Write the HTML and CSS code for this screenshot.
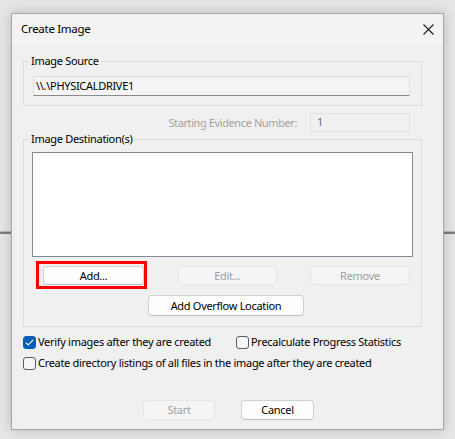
FILE: index.html
```html
<!DOCTYPE html>
<html>
<head>
<meta charset="utf-8">
<title>Create Image</title>
<link rel="stylesheet" href="styles.css">
</head>
<body>
<div class="backdrop-line"></div>
<div class="dialog">
  <div class="titlebar">
    <span class="title">Create Image</span>
    <svg class="close" width="11" height="11" viewBox="0 0 11 11"><path d="M0.5 0.5L10.5 10.5M10.5 0.5L0.5 10.5" stroke="#1b1b1b" stroke-width="1.1" fill="none"/></svg>
  </div>
  <div class="content">
    <fieldset class="group g1">
      <legend>Image Source</legend>
      <div class="textbox">\\.\PHYSICALDRIVE1</div>
    </fieldset>
    <div class="evidence-row">
      <span class="ev-label">Starting Evidence Number:</span>
      <div class="ev-input">1</div>
    </div>
    <fieldset class="group g2">
      <legend>Image Destination(s)</legend>
      <div class="listbox"></div>
      <div class="btn-row">
        <div class="btn-wrap">
          <button class="btn btn-add">Add...</button>
          <span class="highlight"></span>
        </div>
        <button class="btn btn-disabled btn-edit">Edit...</button>
        <button class="btn btn-disabled btn-remove">Remove</button>
      </div>
      <button class="btn btn-overflow">Add Overflow Location</button>
    </fieldset>
    <div class="check-row row1">
      <label class="check check-verify"><span class="box checked"><svg width="9" height="7" viewBox="0 0 9 7"><path d="M0.8 3.6L3.2 6L8.2 0.9" stroke="#fff" stroke-width="1.1" fill="none"/></svg></span><span>Verify images after they are created</span></label>
      <label class="check"><span class="box"></span><span>Precalculate Progress Statistics</span></label>
    </div>
    <div class="check-row row2">
      <label class="check"><span class="box"></span><span>Create directory listings of all files in the image after they are created</span></label>
    </div>
    <div class="footer">
      <button class="btn btn-disabled btn-start">Start</button>
      <button class="btn btn-cancel">Cancel</button>
    </div>
  </div>
</div>
</body>
</html>
```

FILE: styles.css
```css
html, body {
  margin: 0;
  padding: 0;
}
body {
  width: 455px;
  height: 439px;
  background: #e6e6e6;
  font-family: "Noto Sans", "Open Sans", sans-serif;
  font-size: 11px;
  letter-spacing: -0.3px;
  color: #000;
  position: relative;
  overflow: hidden;
}
.backdrop-line {
  position: absolute;
  left: 0;
  right: 0;
  top: 231px;
  height: 2px;
  border-top: 1px solid #b9b9b9;
  background: #7e7e7e;
}
.dialog {
  position: relative;
  box-sizing: border-box;
  margin: 13px 0 0 11px;
  width: 433px;
  height: 417px;
  border: 1px solid #a5a5a5;
  background: #f0f0f0;
  box-shadow: 0 0 12px rgba(0,0,0,0.2);
}
.titlebar {
  height: 30px;
  background: #f3f3f3;
  display: flex;
  align-items: center;
  justify-content: space-between;
  padding: 0 9px 0 9px;
}
.title {
  font-size: 11.5px;
  line-height: 16px;
  padding-bottom: 1px;
}
.close {
  display: block;
  margin-top: 1px;
}
.content {
  display: flex;
  flex-direction: column;
  align-items: flex-start;
}
.group {
  margin: 0 0 0 11px;
  padding: 0;
  width: 399px;
  box-sizing: border-box;
  border: 1px solid #dcdcdc;
  min-inline-size: 0;
}
.group legend {
  margin-left: 5px;
  padding: 0 2px;
  line-height: 14px;
  font-size: 11px;
}
.g1 {
  margin-top: 10px;
  padding-bottom: 9px;
}
.textbox {
  margin: 8px 0 0 9px;
  width: 377px;
  height: 20px;
  box-sizing: border-box;
  background: #f4f4f4;
  border: 1px solid #dedede;
  border-bottom-color: #8a8a8a;
  padding-left: 2px;
  line-height: 17px;
}
.evidence-row {
  margin-top: 7px;
  align-self: stretch;
  display: flex;
  justify-content: flex-end;
  align-items: center;
  padding-right: 33px;
  height: 19px;
}
.ev-label {
  color: #a3a3a3;
  margin-right: 13px;
  letter-spacing: -0.4px;
}
.ev-input {
  width: 100px;
  height: 19px;
  box-sizing: border-box;
  border: 1px solid #e2e2e2;
  background: #f0f0f0;
  color: #6d6d7d;
  padding-left: 6px;
  line-height: 16px;
}
.g2 {
  margin-top: 0;
  padding-bottom: 10px;
}
.listbox {
  margin: 6px 0 0 8px;
  width: 381px;
  height: 105px;
  box-sizing: border-box;
  background: #fff;
  border: 1px solid #868a91;
}
.btn-row {
  margin-top: 9px;
  display: flex;
  padding-left: 19px;
}
.btn {
  font-family: inherit;
  font-size: 11px;
  letter-spacing: -0.3px;
  color: #000;
  background: #fdfdfd;
  border: 1px solid #d0d0d0;
  border-bottom-color: #bdbdbd;
  border-radius: 4px;
  box-sizing: border-box;
  padding: 0;
  margin: 0;
  height: 19px;
  line-height: 16px;
  display: block;
}
.btn-disabled {
  background: #f5f5f5;
  border-color: #e5e5e5;
  color: #a0a0a0;
}
.btn-wrap {
  position: relative;
}
.btn-add {
  width: 101px;
}
.highlight {
  position: absolute;
  left: -7px;
  top: -5px;
  width: 111px;
  height: 28px;
  box-sizing: border-box;
  border: 3px solid #ff0000;
}
.btn-edit {
  width: 99px;
  margin-left: 34px;
}
.btn-remove {
  width: 100px;
  margin-left: 33px;
}
.btn-overflow {
  margin: 10px 0 0 124px;
  width: 156px;
  height: 21px;
}
.check-row {
  display: flex;
  margin-left: 11px;
  height: 14px;
  white-space: nowrap;
}
.row1 {
  margin-top: 8px;
}
.row2 {
  margin-top: 7px;
}
.check {
  display: flex;
  align-items: center;
  gap: 2px;
  line-height: 14px;
}
.check-verify {
  width: 213px;
}
.box {
  width: 13px;
  height: 13px;
  box-sizing: border-box;
  border: 1px solid #5d5d5d;
  border-radius: 3px;
  background: #f6f6f6;
  display: flex;
  align-items: center;
  justify-content: center;
  flex: none;
}
.box.checked {
  background: #005fb8;
  border-color: #005fb8;
}
.box svg {
  display: block;
}
.footer {
  margin: 30px 0 0 131px;
  display: flex;
  gap: 26px;
}
.footer .btn {
  height: 20px;
}
.btn-start {
  width: 72px;
}
.btn-cancel {
  width: 73px;
}
```
